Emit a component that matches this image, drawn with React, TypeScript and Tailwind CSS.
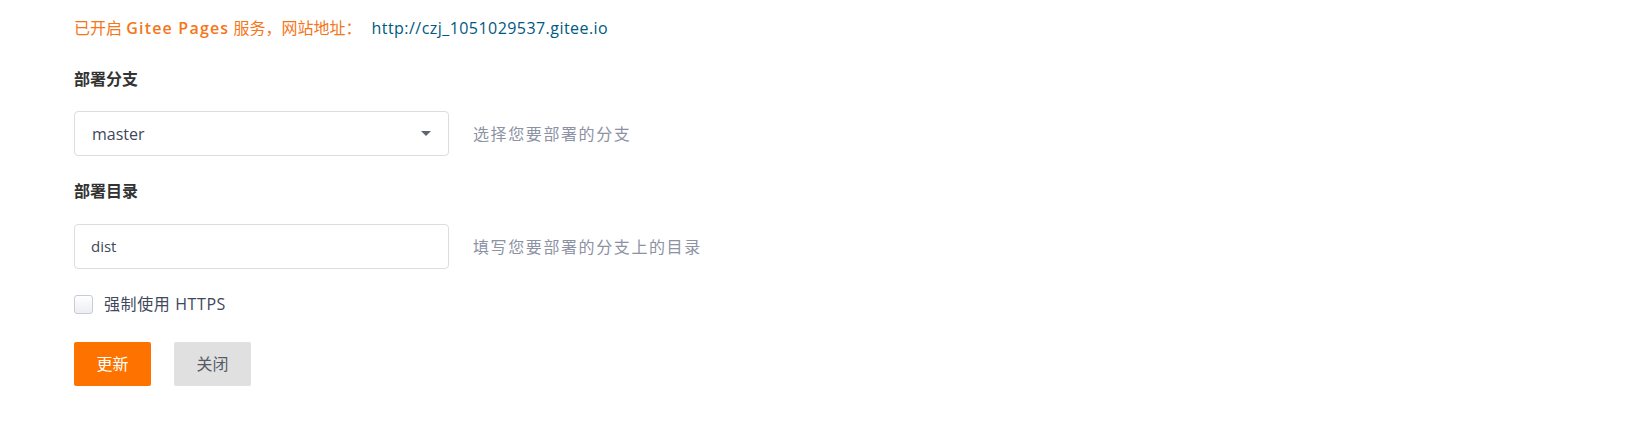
import React from 'react';

const font = { fontFamily: '"Open Sans", "Noto Sans CJK SC", sans-serif' };

export default function App() {
  return (
    <div className="w-[1633px] h-[444px] bg-white pl-[74px] pt-[16px] text-[#40485b]" style={font}>
      {/* Pages status */}
      <div className="flex items-center h-6 text-[16px] leading-6">
        <span className="text-[#f5761a]">
          已开启 <span className="font-semibold tracking-[1.2px]">Gitee Pages</span> 服务，网站地址：
        </span>
        <span className="ml-[10px] tracking-[0.45px] text-[#005980]">http://czj_1051029537.gitee.io</span>
      </div>

      {/* Branch */}
      <div className="mt-[27px] h-6 leading-6 text-[16px] font-bold text-[#333]">部署分支</div>
      <div className="mt-[20px] flex items-center">
        <div className="w-[375px] h-[45px] border border-[#dcdde3] rounded-[4px] flex items-center justify-between pl-[17px] pr-[17px]">
          <span className="text-[16px] text-[#40485b]">master</span>
          <span className="w-0 h-0 border-l-[5px] border-r-[5px] border-t-[5px] border-l-transparent border-r-transparent border-t-[#5f6673]" />
        </div>
        <span className="ml-[24px] text-[16px] tracking-[1.6px] text-[#8c92a4]">选择您要部署的分支</span>
      </div>

      {/* Directory */}
      <div className="mt-[23px] h-6 leading-6 text-[16px] font-bold text-[#333]">部署目录</div>
      <div className="mt-[21px] flex items-center">
        <div className="w-[375px] h-[45px] border border-[#dcdde3] rounded-[4px] flex items-center pl-[16px]">
          <span className="text-[15px] text-[#40485b]">dist</span>
        </div>
        <span className="ml-[24px] text-[16px] tracking-[1.6px] text-[#8c92a4]">填写您要部署的分支上的目录</span>
      </div>

      {/* HTTPS */}
      <label className="mt-[23px] flex items-center h-6">
        <span className="w-[19px] h-[19px] rounded-[3px] border border-[#c9ccd6] bg-gradient-to-b from-white to-[#eceef2]" />
        <span className="ml-[11px] text-[16px] tracking-[0.6px] text-[#40485b]">强制使用 HTTPS</span>
      </label>

      {/* Actions */}
      <div className="mt-[26px] flex items-center gap-[23px]">
        <button className="w-[77px] h-[44px] rounded-[2px] bg-[#fe7300] text-white text-[16px]">更新</button>
        <button className="w-[77px] h-[44px] rounded-[2px] bg-[#e0e0e0] text-[#555a66] text-[16px]">关闭</button>
      </div>
    </div>
  );
}
